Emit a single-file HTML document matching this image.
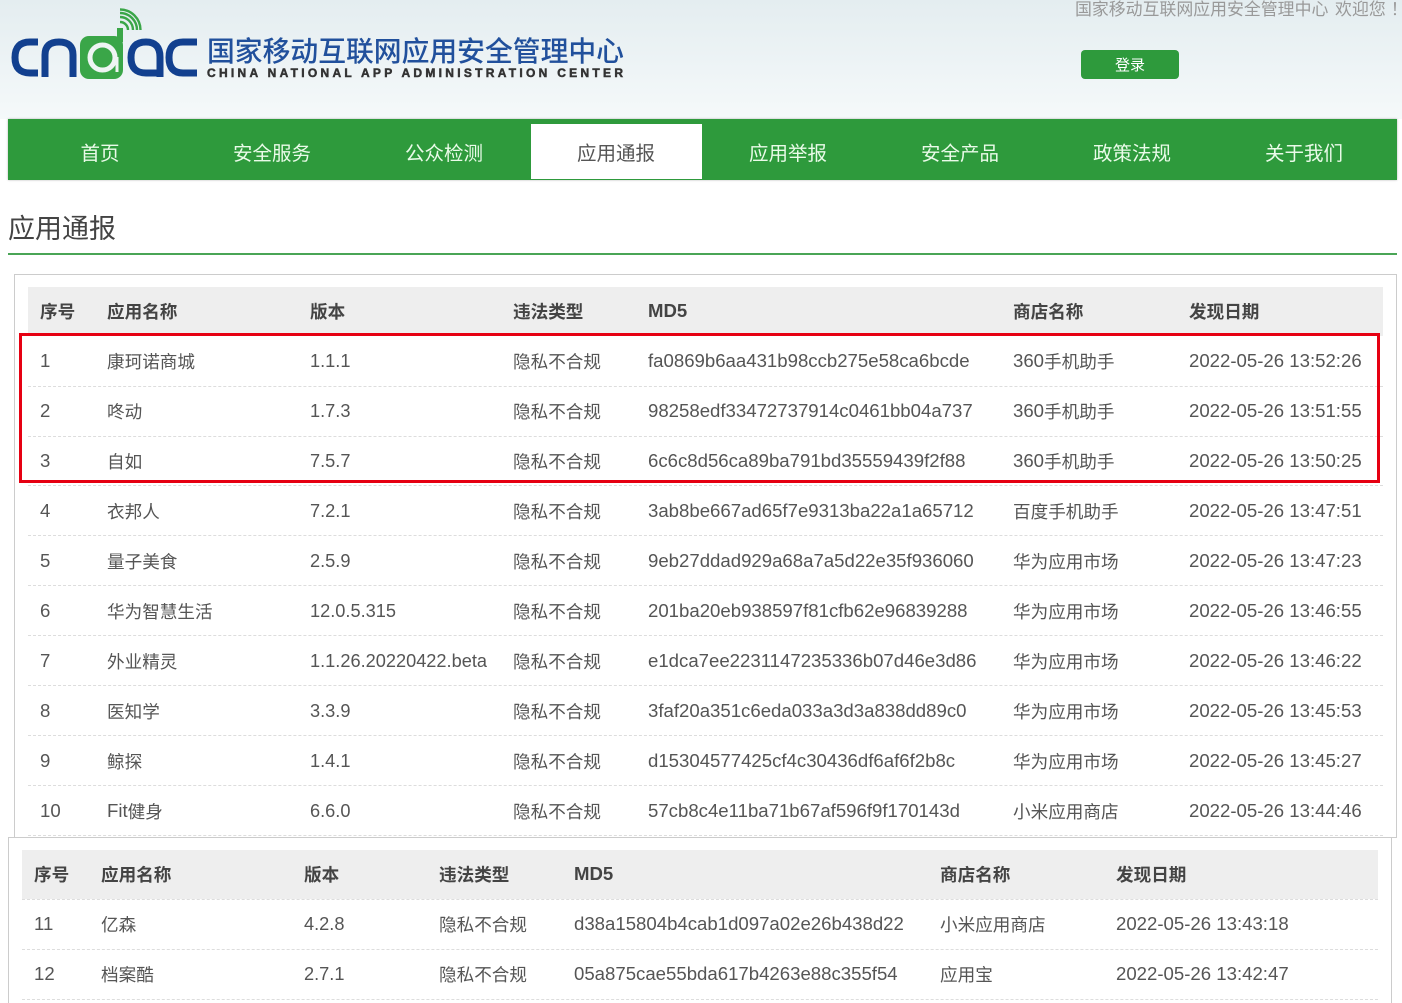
<!DOCTYPE html>
<html lang="zh"><head><meta charset="utf-8"><title>应用通报</title>
<style>
html,body{margin:0;padding:0;background:#fff;width:1402px;height:1003px;overflow:hidden}
#w{position:relative;width:1402px;height:1003px;overflow:hidden;font-family:"Liberation Sans","Noto Sans CJK SC",sans-serif;color:#555}
.a{position:absolute}
.hd{left:0;top:0;width:1402px;height:119px;background:linear-gradient(#e4edf0,#f5f9fa)}
.nav{left:8px;top:119px;width:1389px;height:61px;background:#2e9a3c;box-shadow:0 0 2px rgba(0,0,0,.3)}
.tab{left:531px;top:124px;width:171px;height:55px;background:#fff}
.n{top:120px;height:68px;line-height:68px;width:172px;text-align:center;font-size:19.5px;color:#eafbe9}
.panel{background:#fff;border:1px solid #ccc;box-sizing:border-box}
.th{background:#eee}
.dash{height:0;border-top:1px dashed #ddd}
.r{position:absolute;left:0;width:1402px;height:50px;line-height:50px;font-size:17.6px;color:#555}
.r span{position:absolute;top:0;white-space:nowrap}
.r i{font-style:normal;font-size:18.6px}
.r .c2,.r .c4,.r .c6{top:1px}
.r .c2 i,.r .c6 i{position:relative;top:-1px}
.r .c3 i{font-size:18.2px}
.h span{font-weight:bold;color:#444;top:1px!important}
.h i{position:relative;top:-1px}
.t1 .c1{left:40px}.t1 .c2{left:107px}.t1 .c3{left:310px}.t1 .c4{left:513px}.t1 .c5{left:648px}.t1 .c6{left:1013px}.t1 .c7{left:1189px}
.t2 .c1{left:34px}.t2 .c2{left:101px}.t2 .c3{left:304px}.t2 .c4{left:439px}.t2 .c5{left:574px}.t2 .c6{left:940px}.t2 .c7{left:1116px}
</style></head><body><div id="w">
<div class="a hd"></div>
<svg class="a" style="left:0;top:0" width="210" height="90" viewBox="0 0 210 90" fill="none">
<g stroke="#12408f" stroke-width="7">
<path d="M38 42H30Q15 42 15 57.5Q15 73 30 73H38"/>
<path d="M45 77V55Q45 42 59 42Q73 42 73 55V77"/>
<path d="M160 77V57Q160 42 146 42Q131 42 131 57.500Q131 73 146 73H160"/>
<path d="M197 42H183Q169 42 169 57.500Q169 73 183 73H197"/>
</g>
<rect x="80" y="36" width="43" height="43" rx="9" fill="#3aa648"/>
<rect x="117" y="28" width="6" height="14" fill="#3aa648"/>
<circle cx="102.500" cy="57.500" r="12.500" stroke="#eef5f3" stroke-width="5"/>
<path d="M117 57V72" stroke="#eef5f3" stroke-width="3"/>
<g stroke="#3aa648" stroke-width="2.400">
<path d="M120 22A8 8 0 0 1 128 30"/>
<path d="M120 17A13 13 0 0 1 133 30"/>
<path d="M120 13A17 17 0 0 1 137 30"/>
<path d="M120 9.500A20.500 20.500 0 0 1 140.500 30"/>
</g>
</svg>
<div class="a" style="left:207px;top:33px;font-size:27.800px;font-weight:500;line-height:38px;color:#21509c;white-space:nowrap">国家移动互联网应用安全管理中心</div>
<svg class="a" style="left:200px;top:62px" width="440" height="20"><text x="7" y="15" textLength="416" lengthAdjust="spacing" font-family="Liberation Sans" font-weight="bold" font-size="12" fill="#333" stroke="#333" stroke-width=".5">CHINA NATIONAL APP ADMINISTRATION CENTER</text></svg>
<div class="a" style="left:1075px;top:-2px;font-size:16.900px;line-height:24px;color:#999;white-space:nowrap;word-spacing:2px">国家移动互联网应用安全管理中心 欢迎您<span style="margin-left:5px">！</span></div>
<div class="a" style="left:1081px;top:50px;width:98px;height:29px;border-radius:4px;background:#2e9a3c;color:#fff;font-size:15px;line-height:31px;text-align:center">登录</div>

<div class="a nav"></div>
<div class="a tab"></div>
<div class="a n" style="left:14px">首页</div>
<div class="a n" style="left:186px">安全服务</div>
<div class="a n" style="left:358px">公众检测</div>
<div class="a n" style="left:530px;color:#555">应用通报</div>
<div class="a n" style="left:702px">应用举报</div>
<div class="a n" style="left:874px">安全产品</div>
<div class="a n" style="left:1046px">政策法规</div>
<div class="a n" style="left:1218px">关于我们</div>

<div class="a" style="left:8px;top:209px;font-size:27px;line-height:40px;color:#444">应用通报</div>
<div class="a" style="left:8px;top:253px;width:1389px;height:2px;background:#4aa556"></div>

<div class="a panel" style="left:14px;top:274px;width:1383px;height:564px"></div>
<div class="a th" style="left:28px;top:287px;width:1355px;height:49px"></div>
<div class="a dash" style="left:28px;top:386px;width:1355px"></div>
<div class="a dash" style="left:28px;top:436px;width:1355px"></div>
<div class="a dash" style="left:28px;top:485px;width:1355px"></div>
<div class="a dash" style="left:28px;top:535px;width:1355px"></div>
<div class="a dash" style="left:28px;top:585px;width:1355px"></div>
<div class="a dash" style="left:28px;top:635px;width:1355px"></div>
<div class="a dash" style="left:28px;top:685px;width:1355px"></div>
<div class="a dash" style="left:28px;top:735px;width:1355px"></div>
<div class="a dash" style="left:28px;top:785px;width:1355px"></div>
<div class="a dash" style="left:28px;top:835px;width:1355px"></div>

<div class="t1">
<div class="r h" style="top:286px"><span class="c1">序号</span><span class="c2">应用名称</span><span class="c3">版本</span><span class="c4">违法类型</span><span class="c5"><i>MD5</i></span><span class="c6">商店名称</span><span class="c7">发现日期</span></div>
<div class="r" style="top:336px"><span class="c1"><i>1</i></span><span class="c2">康珂诺商城</span><span class="c3"><i>1.1.1</i></span><span class="c4">隐私不合规</span><span class="c5"><i>fa0869b6aa431b98ccb275e58ca6bcde</i></span><span class="c6"><i>360</i>手机助手</span><span class="c7"><i>2022-05-26 13:52:26</i></span></div>
<div class="r" style="top:386px"><span class="c1"><i>2</i></span><span class="c2">咚动</span><span class="c3"><i>1.7.3</i></span><span class="c4">隐私不合规</span><span class="c5"><i>98258edf33472737914c0461bb04a737</i></span><span class="c6"><i>360</i>手机助手</span><span class="c7"><i>2022-05-26 13:51:55</i></span></div>
<div class="r" style="top:436px"><span class="c1"><i>3</i></span><span class="c2">自如</span><span class="c3"><i>7.5.7</i></span><span class="c4">隐私不合规</span><span class="c5"><i>6c6c8d56ca89ba791bd35559439f2f88</i></span><span class="c6"><i>360</i>手机助手</span><span class="c7"><i>2022-05-26 13:50:25</i></span></div>
<div class="r" style="top:486px"><span class="c1"><i>4</i></span><span class="c2">衣邦人</span><span class="c3"><i>7.2.1</i></span><span class="c4">隐私不合规</span><span class="c5"><i>3ab8be667ad65f7e9313ba22a1a65712</i></span><span class="c6">百度手机助手</span><span class="c7"><i>2022-05-26 13:47:51</i></span></div>
<div class="r" style="top:536px"><span class="c1"><i>5</i></span><span class="c2">量子美食</span><span class="c3"><i>2.5.9</i></span><span class="c4">隐私不合规</span><span class="c5"><i>9eb27ddad929a68a7a5d22e35f936060</i></span><span class="c6">华为应用市场</span><span class="c7"><i>2022-05-26 13:47:23</i></span></div>
<div class="r" style="top:586px"><span class="c1"><i>6</i></span><span class="c2">华为智慧生活</span><span class="c3"><i>12.0.5.315</i></span><span class="c4">隐私不合规</span><span class="c5"><i>201ba20eb938597f81cfb62e96839288</i></span><span class="c6">华为应用市场</span><span class="c7"><i>2022-05-26 13:46:55</i></span></div>
<div class="r" style="top:636px"><span class="c1"><i>7</i></span><span class="c2">外业精灵</span><span class="c3"><i>1.1.26.20220422.beta</i></span><span class="c4">隐私不合规</span><span class="c5"><i>e1dca7ee2231147235336b07d46e3d86</i></span><span class="c6">华为应用市场</span><span class="c7"><i>2022-05-26 13:46:22</i></span></div>
<div class="r" style="top:686px"><span class="c1"><i>8</i></span><span class="c2">医知学</span><span class="c3"><i>3.3.9</i></span><span class="c4">隐私不合规</span><span class="c5"><i>3faf20a351c6eda033a3d3a838dd89c0</i></span><span class="c6">华为应用市场</span><span class="c7"><i>2022-05-26 13:45:53</i></span></div>
<div class="r" style="top:736px"><span class="c1"><i>9</i></span><span class="c2">鲸探</span><span class="c3"><i>1.4.1</i></span><span class="c4">隐私不合规</span><span class="c5"><i>d15304577425cf4c30436df6af6f2b8c</i></span><span class="c6">华为应用市场</span><span class="c7"><i>2022-05-26 13:45:27</i></span></div>
<div class="r" style="top:786px"><span class="c1"><i>10</i></span><span class="c2"><i>Fit</i>健身</span><span class="c3"><i>6.6.0</i></span><span class="c4">隐私不合规</span><span class="c5"><i>57cb8c4e11ba71b67af596f9f170143d</i></span><span class="c6">小米应用商店</span><span class="c7"><i>2022-05-26 13:44:46</i></span></div>
</div>

<div class="a panel" style="left:8px;top:837px;width:1384px;height:180px"></div>
<div class="a th" style="left:22px;top:850px;width:1356px;height:49px"></div>
<div class="a dash" style="left:22px;top:899px;width:1356px"></div>
<div class="a dash" style="left:22px;top:949px;width:1356px"></div>
<div class="a dash" style="left:22px;top:999px;width:1356px"></div>
<div class="t2">
<div class="r h" style="top:849px"><span class="c1">序号</span><span class="c2">应用名称</span><span class="c3">版本</span><span class="c4">违法类型</span><span class="c5"><i>MD5</i></span><span class="c6">商店名称</span><span class="c7">发现日期</span></div>
<div class="r" style="top:899px"><span class="c1"><i>11</i></span><span class="c2">亿森</span><span class="c3"><i>4.2.8</i></span><span class="c4">隐私不合规</span><span class="c5"><i>d38a15804b4cab1d097a02e26b438d22</i></span><span class="c6">小米应用商店</span><span class="c7"><i>2022-05-26 13:43:18</i></span></div>
<div class="r" style="top:949px"><span class="c1"><i>12</i></span><span class="c2">档案酷</span><span class="c3"><i>2.7.1</i></span><span class="c4">隐私不合规</span><span class="c5"><i>05a875cae55bda617b4263e88c355f54</i></span><span class="c6">应用宝</span><span class="c7"><i>2022-05-26 13:42:47</i></span></div>
</div>

<div class="a" style="left:19px;top:333px;width:1361px;height:150px;box-sizing:border-box;border:3px solid #e60012"></div>
</div></body></html>
